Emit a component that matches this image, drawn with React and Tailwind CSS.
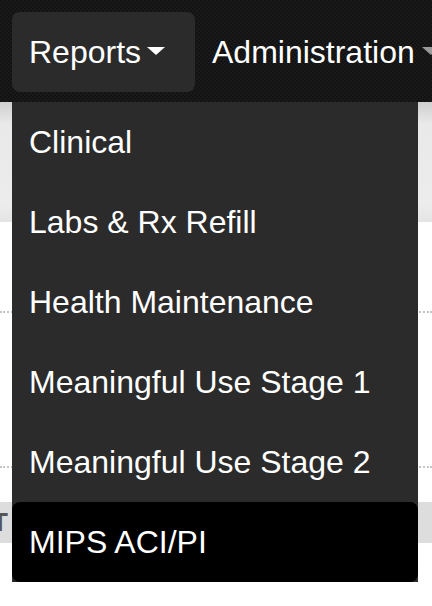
import React from 'react';

const items = [
  'Clinical',
  'Labs & Rx Refill',
  'Health Maintenance',
  'Meaningful Use Stage 1',
  'Meaningful Use Stage 2',
  'MIPS ACI/PI',
];

const Caret = ({ className }) => (
  <svg width="18" height="8" viewBox="0 0 18 8" className={className}>
    <path d="M0 0h18L9 8z" fill="currentColor" />
  </svg>
);

export default function App() {
  return (
    <div className="relative h-[606px] w-[432px] overflow-hidden bg-white font-['Liberation_Sans',Arial,sans-serif]">
      {/* top nav */}
      <nav className="flex h-[102px] items-start overflow-hidden bg-[#161616] bg-[repeating-conic-gradient(#1a1a1a_0_25%,#121212_0_50%)] bg-[length:4px_4px] pt-3 pl-3">
        <button className="flex h-[80px] w-[183px] shrink-0 items-center rounded-lg bg-[#2b2b2b] pl-[17px] text-[32px] leading-[80px] text-white">
          Reports
          <Caret className="ml-[6px] mt-[-2px] text-white" />
        </button>
        <div className="flex h-[80px] shrink-0 items-center whitespace-nowrap pl-[17px] text-[32px] leading-[80px] text-white">
          Administration
          <Caret className="ml-[7px] mt-[-2px] text-[#9a9a9a]" />
        </div>
      </nav>

      {/* page behind menu */}
      <div className="h-[120px] bg-[linear-gradient(to_bottom,#cfcfcf,#e9e9e9_22px,#ececec_85%,#e4e4e4)]" />
      <div className="h-[91px] border-b-2 border-dotted border-[#c4c4c4]" />
      <div className="h-[155px] border-b-2 border-dotted border-[#c4c4c4]" />
      <div className="mt-[34px] flex h-[41px] items-center bg-[#dddddd]">
        <span className="-ml-[8px] text-[26px] font-bold text-[#555555]">T</span>
      </div>

      {/* dropdown */}
      <ul className="absolute left-3 top-[102px] w-[406px] bg-[#2b2b2b]">
        {items.map((label, idx) => (
          <li
            key={idx}
            className={`h-[80px] pl-[17px] text-[32px] leading-[80px] text-white ${
              idx === items.length - 1 ? 'rounded-lg bg-black' : ''
            }`}
          >
            {label}
          </li>
        ))}
      </ul>
    </div>
  );
}
